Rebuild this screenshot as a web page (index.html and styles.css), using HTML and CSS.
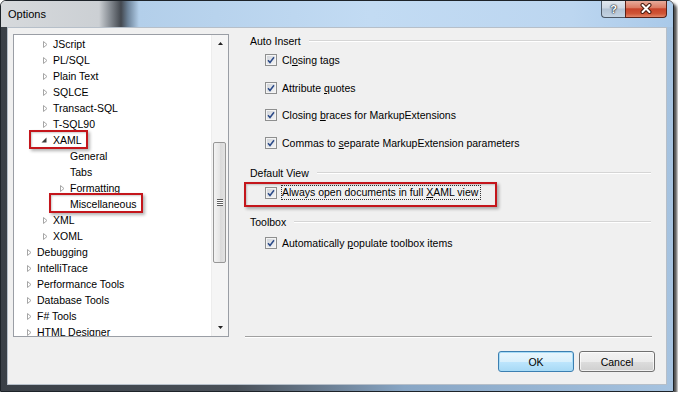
FILE: index.html
```html
<!DOCTYPE html>
<html lang="en">
<head>
    <meta charset="UTF-8">
    <title>Options</title>
    <link rel="stylesheet" href="styles.css">
</head>
<body>
<div class="window">
    <div class="titlebar">
        <span class="title">Options</span>
        <div class="caption-btns">
            <span class="cap-btn help">?</span>
            <span class="cap-btn close">
                <svg width="14" height="11" viewBox="0 0 14 11"><path d="M3.5 2l7 7M10.5 2l-7 7" stroke="#4a1c12" stroke-width="4" stroke-linecap="round"/><path d="M3.5 2l7 7M10.5 2l-7 7" stroke="#fff" stroke-width="2" stroke-linecap="round"/></svg>
            </span>
        </div>
    </div>
    <div class="frame">
        <div class="client">
            <div class="main">
                <div class="tree">
                    <div class="tree-list">
                        <div class="node lvl2"><span class="exp"><svg class="closed" width="6" height="9" viewBox="0 0 6 9"><path d="M1.5 1.5v6l3.5-3z" fill="#fff" stroke="#a6a6a6"/></svg></span>JScript</div>
                        <div class="node lvl2"><span class="exp"><svg class="closed" width="6" height="9" viewBox="0 0 6 9"><path d="M1.5 1.5v6l3.5-3z" fill="#fff" stroke="#a6a6a6"/></svg></span>PL/SQL</div>
                        <div class="node lvl2"><span class="exp"><svg class="closed" width="6" height="9" viewBox="0 0 6 9"><path d="M1.5 1.5v6l3.5-3z" fill="#fff" stroke="#a6a6a6"/></svg></span>Plain Text</div>
                        <div class="node lvl2"><span class="exp"><svg class="closed" width="6" height="9" viewBox="0 0 6 9"><path d="M1.5 1.5v6l3.5-3z" fill="#fff" stroke="#a6a6a6"/></svg></span>SQLCE</div>
                        <div class="node lvl2"><span class="exp"><svg class="closed" width="6" height="9" viewBox="0 0 6 9"><path d="M1.5 1.5v6l3.5-3z" fill="#fff" stroke="#a6a6a6"/></svg></span>Transact-SQL</div>
                        <div class="node lvl2"><span class="exp"><svg class="closed" width="6" height="9" viewBox="0 0 6 9"><path d="M1.5 1.5v6l3.5-3z" fill="#fff" stroke="#a6a6a6"/></svg></span>T-SQL90</div>
                        <div class="node lvl2"><span class="exp"><svg width="6" height="6" viewBox="0 0 6 6"><path d="M5.5 .5v5h-5z" fill="#3c3c3c"/></svg></span>XAML</div>
                        <div class="node lvl3"><span class="exp"></span>General</div>
                        <div class="node lvl3"><span class="exp"></span>Tabs</div>
                        <div class="node lvl3"><span class="exp"><svg class="closed" width="6" height="9" viewBox="0 0 6 9"><path d="M1.5 1.5v6l3.5-3z" fill="#fff" stroke="#a6a6a6"/></svg></span>Formatting</div>
                        <div class="node lvl3"><span class="exp"></span>Miscellaneous</div>
                        <div class="node lvl2"><span class="exp"><svg class="closed" width="6" height="9" viewBox="0 0 6 9"><path d="M1.5 1.5v6l3.5-3z" fill="#fff" stroke="#a6a6a6"/></svg></span>XML</div>
                        <div class="node lvl2"><span class="exp"><svg class="closed" width="6" height="9" viewBox="0 0 6 9"><path d="M1.5 1.5v6l3.5-3z" fill="#fff" stroke="#a6a6a6"/></svg></span>XOML</div>
                        <div class="node lvl1"><span class="exp"><svg class="closed" width="6" height="9" viewBox="0 0 6 9"><path d="M1.5 1.5v6l3.5-3z" fill="#fff" stroke="#a6a6a6"/></svg></span>Debugging</div>
                        <div class="node lvl1"><span class="exp"><svg class="closed" width="6" height="9" viewBox="0 0 6 9"><path d="M1.5 1.5v6l3.5-3z" fill="#fff" stroke="#a6a6a6"/></svg></span>IntelliTrace</div>
                        <div class="node lvl1"><span class="exp"><svg class="closed" width="6" height="9" viewBox="0 0 6 9"><path d="M1.5 1.5v6l3.5-3z" fill="#fff" stroke="#a6a6a6"/></svg></span>Performance Tools</div>
                        <div class="node lvl1"><span class="exp"><svg class="closed" width="6" height="9" viewBox="0 0 6 9"><path d="M1.5 1.5v6l3.5-3z" fill="#fff" stroke="#a6a6a6"/></svg></span>Database Tools</div>
                        <div class="node lvl1"><span class="exp"><svg class="closed" width="6" height="9" viewBox="0 0 6 9"><path d="M1.5 1.5v6l3.5-3z" fill="#fff" stroke="#a6a6a6"/></svg></span>F# Tools</div>
                        <div class="node lvl1"><span class="exp"><svg class="closed" width="6" height="9" viewBox="0 0 6 9"><path d="M1.5 1.5v6l3.5-3z" fill="#fff" stroke="#a6a6a6"/></svg></span>HTML Designer</div>
                    </div>
                    <div class="scrollbar">
                        <div class="sb-btn"><svg width="5" height="3" viewBox="0 0 5 3"><path d="M0 3h5L2.5 0z" fill="#222"/></svg></div>
                        <div class="sb-track">
                            <div class="sb-thumb"><span class="grip"></span></div>
                        </div>
                        <div class="sb-btn"><svg width="5" height="3" viewBox="0 0 5 3"><path d="M0 0h5L2.5 3z" fill="#222"/></svg></div>
                    </div>
                    <span class="mark mark-xaml"></span>
                    <span class="mark mark-misc"></span>
                </div>
                <div class="pane">
                    <div class="group-head">Auto Insert</div>
                    <div class="opts">
                        <div class="opt"><span class="cb"><svg width="8" height="8" viewBox="0 0 8 8"><path d="M1 4.2l2 2.3L7 1.2" fill="none" stroke="#2b4a88" stroke-width="1.5"/></svg></span><span class="lbl">Cl<u>o</u>sing tags</span></div>
                        <div class="opt"><span class="cb"><svg width="8" height="8" viewBox="0 0 8 8"><path d="M1 4.2l2 2.3L7 1.2" fill="none" stroke="#2b4a88" stroke-width="1.5"/></svg></span><span class="lbl">Attribute <u>q</u>uotes</span></div>
                        <div class="opt"><span class="cb"><svg width="8" height="8" viewBox="0 0 8 8"><path d="M1 4.2l2 2.3L7 1.2" fill="none" stroke="#2b4a88" stroke-width="1.5"/></svg></span><span class="lbl">Closing <u>b</u>races for MarkupExtensions</span></div>
                        <div class="opt"><span class="cb"><svg width="8" height="8" viewBox="0 0 8 8"><path d="M1 4.2l2 2.3L7 1.2" fill="none" stroke="#2b4a88" stroke-width="1.5"/></svg></span><span class="lbl">Commas to <u>s</u>eparate MarkupExtension parameters</span></div>
                    </div>
                    <div class="group-head head-view">Default View</div>
                    <div class="opt opt-view"><span class="cb"><svg width="8" height="8" viewBox="0 0 8 8"><path d="M1 4.2l2 2.3L7 1.2" fill="none" stroke="#2b4a88" stroke-width="1.5"/></svg></span><span class="lbl focus">Always open documents in full <u>X</u>AML view</span></div>
                    <div class="group-head head-toolbox">Toolbox</div>
                    <div class="opt opt-toolbox"><span class="cb"><svg width="8" height="8" viewBox="0 0 8 8"><path d="M1 4.2l2 2.3L7 1.2" fill="none" stroke="#2b4a88" stroke-width="1.5"/></svg></span><span class="lbl">Automatically <u>p</u>opulate toolbox items</span></div>
                    <div class="sep"></div>
                    <span class="mark mark-view"></span>
                </div>
            </div>
            <div class="actions">
                <button class="btn btn-default">OK</button>
                <button class="btn">Cancel</button>
            </div>
        </div>
    </div>
</div>
</body>
</html>
```

FILE: styles.css
```css
body {
    margin: 0;
    background: #fff;
    font-family: "Liberation Sans", Arial, sans-serif;
    font-size: 10.5px;
    color: #000;
}

.window {
    width: 674px;
    height: 392px;
    box-sizing: border-box;
    border: 1px solid #1d2329;
    border-radius: 6px 6px 0 0;
    box-shadow: 3px 3px 3px rgba(0, 0, 0, 0.7);
    display: flex;
    flex-direction: column;
    overflow: hidden;
}

/* title bar */
.titlebar {
    height: 26px;
    flex: none;
    display: flex;
    align-items: flex-start;
    background: linear-gradient(to right, #d6d9dc 0, #ccd0d4 98px, #80868d 110px, #43484f 120px, #6d8399 127px, #b3cfea 138px, #c2dbf3 55%, #bcd6f0 85%, #a9c9e9 100%);
}
.title {
    font-size: 11px;
    line-height: 12px;
    margin: 7px 0 0 7px;
}
.caption-btns {
    margin-left: auto;
    margin-right: 6px;
    margin-top: -1px;
    display: flex;
}
.cap-btn {
    height: 18px;
    box-sizing: border-box;
    border: 1px solid #4c5866;
    border-top: none;
    display: flex;
    align-items: center;
    justify-content: center;
}
.help {
    width: 24px;
    border-right: none;
    border-radius: 0 0 0 4px;
    background: linear-gradient(#e4eaf0, #cdd7e2 48%, #b2c2d3 52%, #c4d3e2);
    color: #fff;
    font-weight: bold;
    font-size: 11px;
    text-shadow: 0 0 1px #1b2733, 0 0 1px #1b2733, 0 0 2px #1b2733;
}
.close {
    width: 42px;
    border-color: #5a2218;
    border-radius: 0 0 4px 0;
    background: linear-gradient(#e9b2a3, #dc7c64 45%, #c8432a 52%, #cf5536 80%, #e28568);
}

/* frame and client */
.frame {
    flex: 1;
    display: flex;
    padding: 0 6px 6px;
    background: linear-gradient(to right, #3a4047, #4a5159 35%, #88a6c5 60%, #a6c3e0);
}
.client {
    flex: 1;
    display: flex;
    flex-direction: column;
    padding: 6px 0 0 5px;
    background: #f0f0f0;
    border: 1px solid #b6bfc9;
}
.main {
    display: flex;
    gap: 11px;
}

/* tree */
.tree {
    width: 216px;
    height: 303px;
    box-sizing: border-box;
    border: 1px solid #9a9ea5;
    background: #fff;
    display: flex;
    position: relative;
    overflow: hidden;
}
.tree-list {
    flex: 1;
    padding-top: 1px;
}
.node {
    height: 16px;
    display: flex;
    align-items: center;
    white-space: nowrap;
}
.lvl1 { padding-left: 11px; }
.lvl2 { padding-left: 27px; }
.lvl3 { padding-left: 44px; }
.exp {
    width: 12px;
    flex: none;
    display: flex;
    align-items: center;
}
.exp .closed {
    margin-left: 1px;
}
.scrollbar {
    width: 17px;
    flex: none;
    display: flex;
    flex-direction: column;
    background: #f5f5f5;
    border-left: 1px solid #ededed;
    box-sizing: border-box;
}
.sb-btn {
    height: 17px;
    display: flex;
    align-items: center;
    justify-content: center;
}
.sb-track {
    flex: 1;
    padding-top: 90px;
}
.sb-thumb {
    height: 121px;
    margin: 0 2px 0 1px;
    box-sizing: border-box;
    border: 1px solid #979797;
    border-radius: 2px;
    background: linear-gradient(to right, #f3f3f3, #e6e6e6 50%, #d8d8d8 51%, #e2e2e2);
    display: flex;
    align-items: center;
    justify-content: center;
}
.grip {
    width: 6px;
    height: 7px;
    background: repeating-linear-gradient(#5f5f5f 0 1px, #fff 1px 2px);
}

/* annotation boxes */
.mark {
    position: absolute;
    box-sizing: border-box;
    border: 2px solid #c4161c;
    box-shadow: 2px 2px 3px rgba(0, 0, 0, 0.3), inset 1px 1px 2px rgba(0, 0, 0, 0.2);
}
.mark-xaml { left: 15px; top: 95px; width: 59px; height: 19px; }
.mark-misc { left: 35px; top: 158px; width: 94px; height: 20px; }
.mark-view { left: 4px; top: 148px; width: 253px; height: 25px; }

/* options pane */
.pane {
    width: 412px;
    height: 304px;
    display: flex;
    flex-direction: column;
    position: relative;
}
.group-head {
    height: 14px;
    display: flex;
    align-items: center;
    padding-left: 10px;
}
.group-head::after {
    content: "";
    flex: 1;
    margin: 0 1px 0 8px;
    border-top: 1px solid #d5d5d5;
    border-bottom: 1px solid #fff;
}
.head-view { margin-top: 15px; }
.head-toolbox { margin-top: 14px; }
.opts {
    display: flex;
    flex-direction: column;
    gap: 11.67px;
    margin-top: 4px;
}
.opt {
    height: 16px;
    display: flex;
    align-items: center;
    padding-left: 25px;
    white-space: nowrap;
}
.opt-view { margin-top: 5px; }
.opt-toolbox { margin-top: 6px; }
.cb {
    width: 12px;
    height: 12px;
    box-sizing: border-box;
    flex: none;
    margin-right: 5px;
    border: 1px solid #8e8f8f;
    background: linear-gradient(135deg, #cdd1d7, #f7f7f7);
    box-shadow: inset 0 0 0 1px #f4f4f4;
    display: flex;
    align-items: center;
    justify-content: center;
}
.focus {
    border: 1px dotted #333;
    margin-left: -1px;
    padding: 0 2px 0 0;
    line-height: 13px;
}
.sep {
    margin: auto 0 0 5px;
    border-top: 1px solid #a0a0a0;
    border-bottom: 1px solid #fff;
}

/* buttons */
.actions {
    display: flex;
    justify-content: flex-end;
    gap: 5px;
    margin-top: 13px;
    padding-right: 11px;
}
.btn {
    width: 76px;
    height: 21px;
    box-sizing: border-box;
    border: 1px solid #707070;
    border-radius: 3px;
    background: linear-gradient(#f2f2f2, #ebebeb 50%, #dddddd 51%, #cfcfcf);
    box-shadow: inset 0 0 0 1px rgba(255, 255, 255, 0.7);
    font-family: inherit;
    font-size: 10.5px;
    color: #000;
    padding: 0;
}
.btn-default {
    border-color: #3c7fb1;
    background: linear-gradient(#eaf6fd, #d9f0fc 50%, #bee6fd 51%, #a7d9f5);
    box-shadow: inset 0 0 0 1px #a8dcf7;
}
```
